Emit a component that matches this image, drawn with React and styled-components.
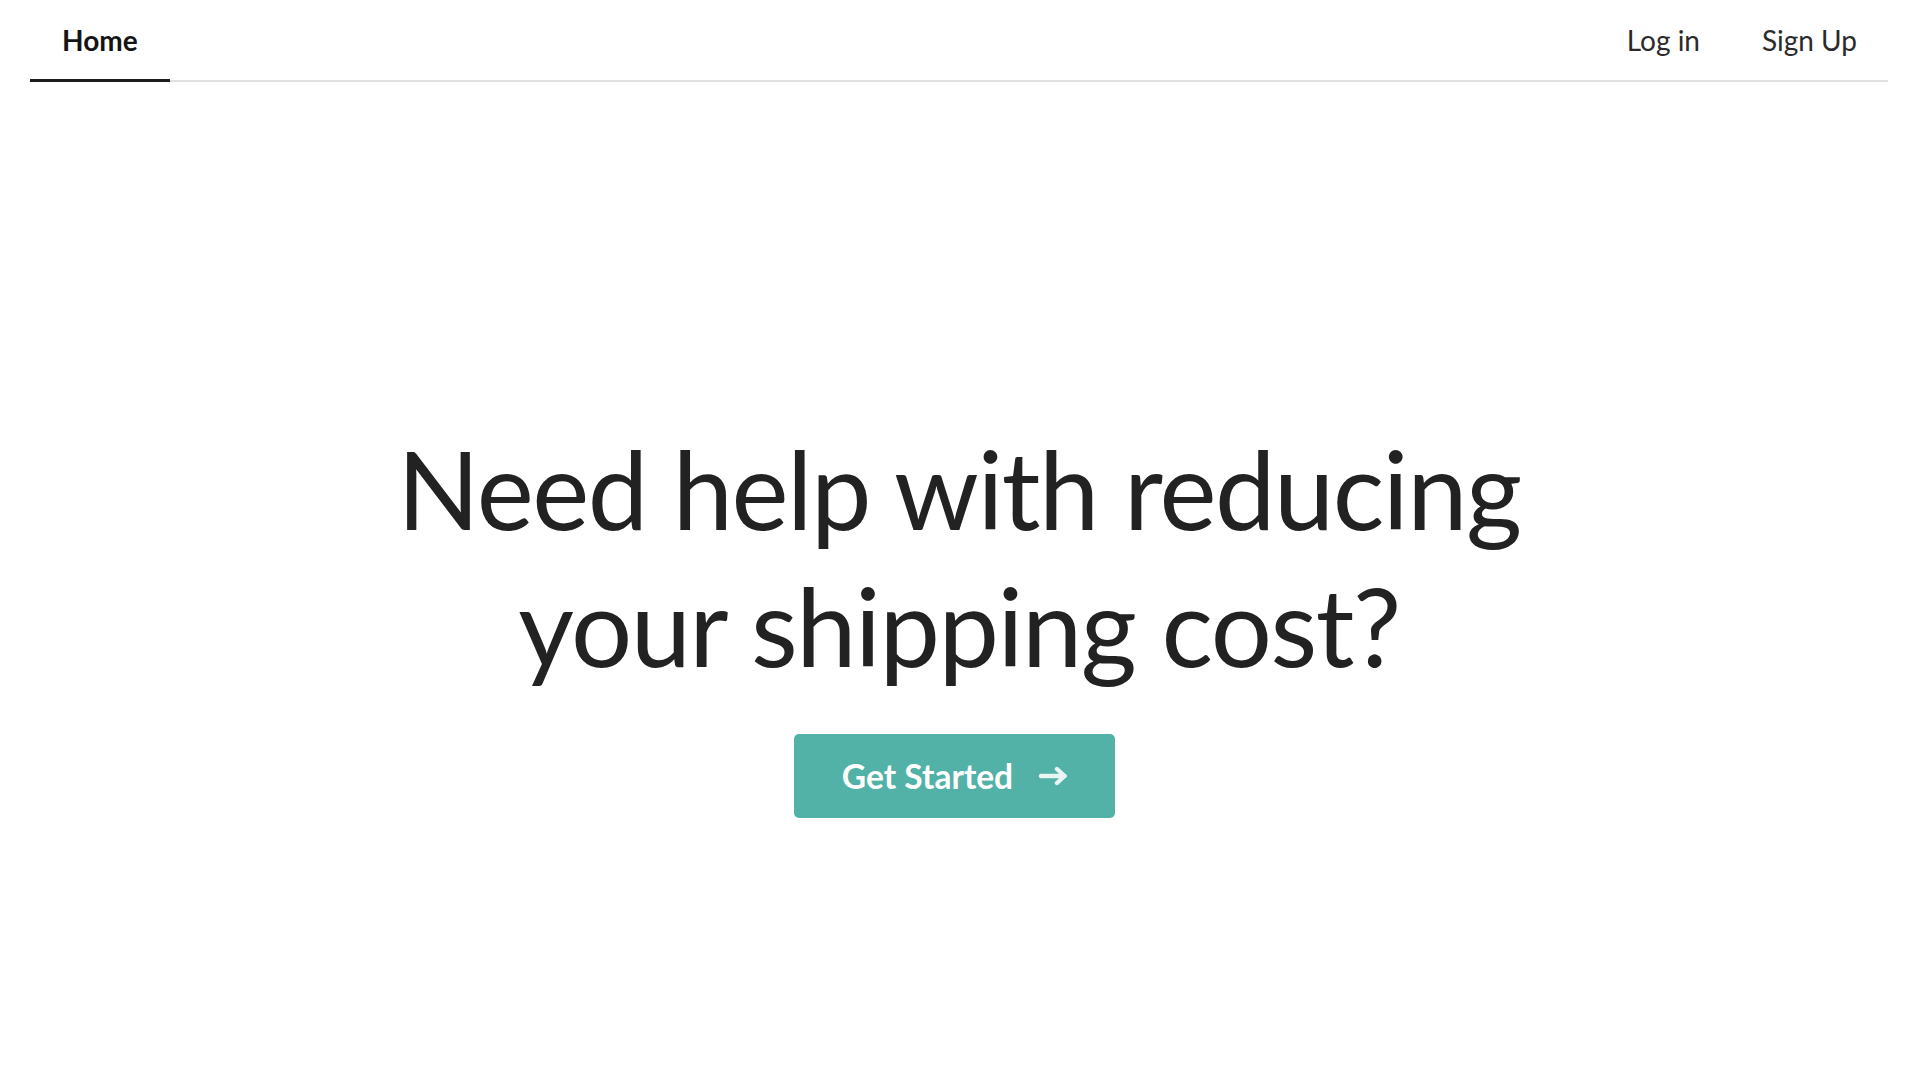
import React from "react";
import styled, { createGlobalStyle } from "styled-components";

const GlobalStyle = createGlobalStyle`
  body {
    margin: 0;
    background: #fff;
    font-family: Lato, "Open Sans", sans-serif;
    color: #222;
  }
`;

const Page = styled.div`
  min-height: 1080px;
  display: flex;
  flex-direction: column;
  padding: 0 32px 0 30px;
`;

const TabBar = styled.nav`
  display: flex;
  height: 82px;
  border-bottom: 2px solid #e0e0e0;
  box-sizing: border-box;
`;

const Tab = styled.a`
  display: flex;
  align-items: center;
  padding: 0 ${p => (p.$active ? 32 : 31)}px;
  margin-bottom: -2px;
  font-size: 28px;
  font-weight: ${p => (p.$active ? 700 : 400)};
  color: ${p => (p.$active ? "#141414" : "#2b2b2b")};
  border-bottom: 3px solid ${p => (p.$active ? "#1c1c1c" : "transparent")};
  text-decoration: none;
  cursor: pointer;
  ${p => p.$push && "margin-left: auto;"}
`;

const Hero = styled.section`
  display: flex;
  flex-direction: column;
  align-items: center;
  padding-top: 338px;
`;

const Heading = styled.h1`
  margin: 0;
  font-size: 108px;
  line-height: 137px;
  font-weight: 400;
  letter-spacing: -1.5px;
  text-align: center;
  color: #222;
`;

const Button = styled.button`
  margin: 40px 9px 0 0;
  height: 84px;
  display: flex;
  align-items: center;
  gap: 25px;
  padding: 0 47px 0 48px;
  border: none;
  border-radius: 5px;
  background: #52b2a8;
  color: #fff;
  font-family: inherit;
  font-size: 33.5px;
  font-weight: 700;
  cursor: pointer;
`;

const Arrow = () => (
  <svg width="30" height="20" viewBox="0 0 30 20" fill="none" stroke="#e8f5f3" strokeWidth="4.4" strokeLinecap="round" strokeLinejoin="round">
    <path d="M3 10H26.5" />
    <path d="M19 3L26.5 10L19 17" />
  </svg>
);

export default function App() {
  return (
    <>
      <GlobalStyle />
      <Page>
        <TabBar>
          <Tab $active>Home</Tab>
          <Tab $push>Log in</Tab>
          <Tab>Sign Up</Tab>
        </TabBar>
        <Hero>
          <Heading>
            Need help with reducing
            <br />
            your shipping cost?
          </Heading>
          <Button>
            Get Started
            <Arrow />
          </Button>
        </Hero>
      </Page>
    </>
  );
}
